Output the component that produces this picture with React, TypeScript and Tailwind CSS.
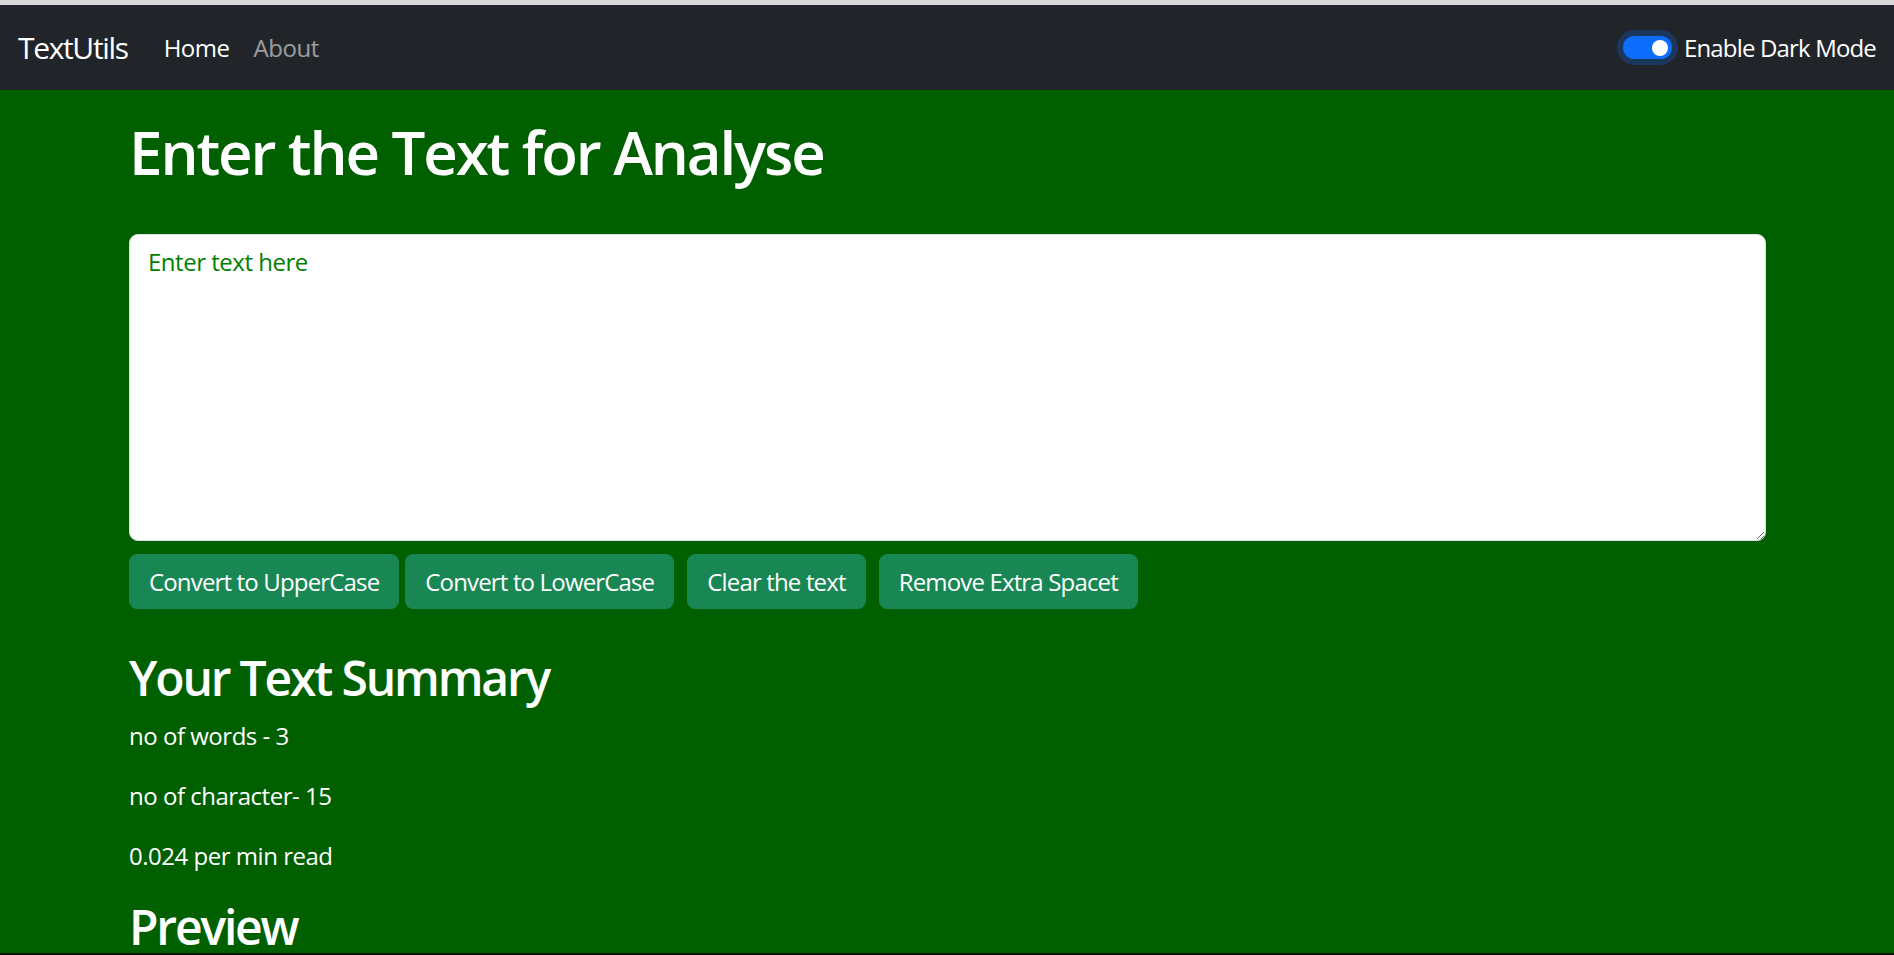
import React, { useState } from 'react';

const buttons = [
  { label: 'Convert to UpperCase', gap: 'ml-0' },
  { label: 'Convert to LowerCase', gap: 'ml-[6px]' },
  { label: 'Clear the text', gap: 'ml-[13px]' },
  { label: 'Remove Extra Spacet', gap: 'ml-[13px]' },
];

function Navbar() {
  return (
    <nav className="h-[85px] shrink-0 bg-[#212529] flex items-center justify-between px-[18px]">
      <div className="flex items-center">
        <a href="#" className="text-[30px] leading-[45px] text-white mr-[24px] tracking-[-0.045em]">
          TextUtils
        </a>
        <a href="#" className="text-[24px] leading-[36px] text-white px-[12px]">
          Home
        </a>
        <a href="#" className="text-[24px] leading-[36px] text-white/55 px-[12px]">
          About
        </a>
      </div>
      <div className="flex items-center">
        <div className="w-[49px] h-[23px] rounded-full bg-[#0d6efd] shadow-[0_0_0_6px_rgba(13,110,253,0.25)] flex items-center justify-end pr-[4px]">
          <div className="w-[16px] h-[16px] rounded-full bg-white" />
        </div>
        <span className="ml-[12px] text-[24px] leading-[36px] text-white tracking-[-0.035em]">Enable Dark Mode</span>
      </div>
    </nav>
  );
}

export default function App() {
  const [text, setText] = useState('Enter text here');

  return (
    <div className="h-[955px] flex flex-col overflow-hidden bg-[#006000] font-['Open_Sans',sans-serif] tracking-[-0.03em]">
      <div className="h-[5px] shrink-0 bg-[#d9d9d9]" />
      <Navbar />
      <main className="flex-1 overflow-hidden">
        <div className="ml-[129px] w-[1637px] pt-[26px] text-white">
          <h1 className="text-[60px] leading-[72px] font-semibold mb-[46px] tracking-[-0.035em]">
            Enter the Text for Analyse
          </h1>
          <textarea
            value={text}
            onChange={(e) => setText(e.target.value)}
            className="block w-full h-[307px] bg-white border border-[#dee2e6] rounded-[9px] px-[18px] py-[9px] text-[24px] leading-[36px] text-[#008000] outline-none"
          />
          <div className="flex mt-[13px]">
            {buttons.map((b) => (
              <button
                key={b.label}
                className={`${b.gap} h-[55px] px-[19px] rounded-[8px] bg-[#198754] border border-[#198754] text-white text-[24px] leading-[36px] tracking-[-0.035em]`}
              >
                {b.label}
              </button>
            ))}
          </div>
          <h2 className="mt-[40px] text-[48px] leading-[58px] font-semibold mb-[11px] tracking-[-0.045em]">
            Your Text Summary
          </h2>
          <p className="text-[24px] leading-[36px] mb-[24px]">no of words - 3</p>
          <p className="text-[24px] leading-[36px] mb-[24px]">no of character- 15</p>
          <p className="text-[24px] leading-[36px] mb-[24px]">0.024 per min read</p>
          <h2 className="text-[48px] leading-[58px] font-semibold tracking-[-0.045em]">Preview</h2>
        </div>
      </main>
      <div className="h-[2px] shrink-0 bg-[#111111]" />
    </div>
  );
}
